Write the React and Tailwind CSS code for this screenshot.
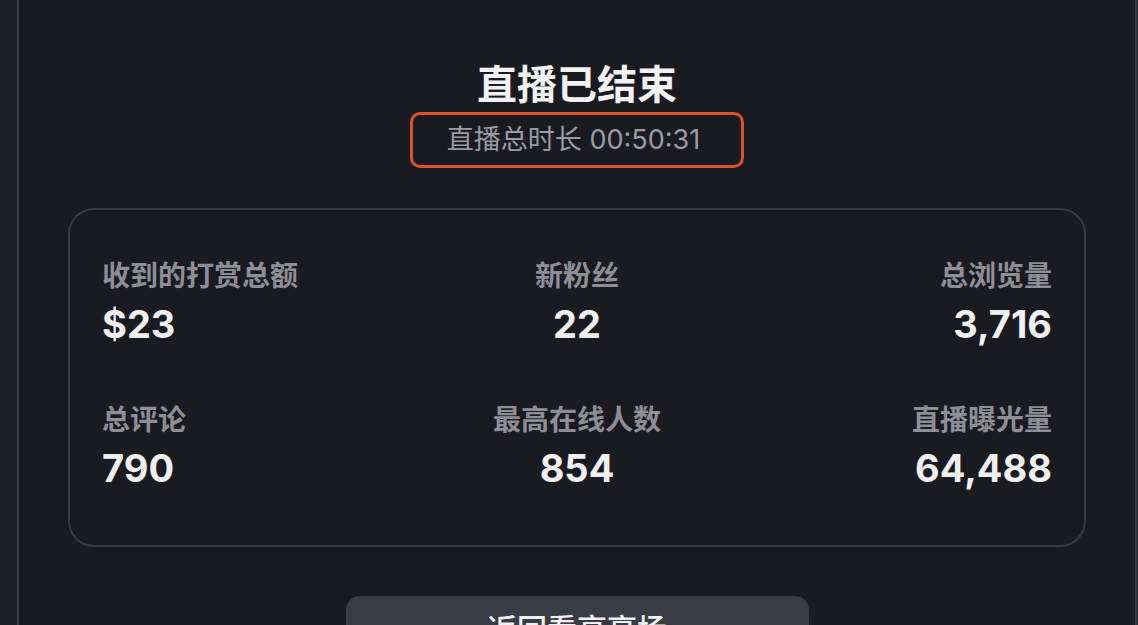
export default function App() {
  const stats = [
    { label: "收到的打赏总额", value: "$23", align: "text-left" },
    { label: "新粉丝", value: "22", align: "text-center" },
    { label: "总浏览量", value: "3,716", align: "text-right" },
    { label: "总评论", value: "790", align: "text-left" },
    { label: "最高在线人数", value: "854", align: "text-center" },
    { label: "直播曝光量", value: "64,488", align: "text-right" },
  ];
  const font = { fontFamily: 'Inter, "Noto Sans CJK SC", "Noto Sans", sans-serif' };
  return (
    <div className="w-[1138px] h-[625px] bg-[#1d1e23] flex overflow-hidden" style={font}>
      <div className="ml-[17px] w-[1120px] h-[625px] border-l-2 border-r-2 border-[#3b3c42] bg-[#1a1b21] flex flex-col items-center pt-[61px]">
        <h1 className="text-[40px] leading-[48px] font-bold text-[#f2f2f4]">直播已结束</h1>
        <div className="mt-[3px] shrink-0 flex items-center pl-[34px] pr-[41px] py-[9px] border-[3px] border-[#e0512b] rounded-[10px]">
          <span className="text-[27px] leading-[32px] text-[#9a9ba3]">直播总时长 00:50:31</span>
        </div>
        <div className="mt-[40px] shrink-0 w-[1018px] border-2 border-[#3a3b42] rounded-[26px] px-[32px] pt-[48px] pb-[54px] grid grid-cols-3 gap-y-[55px]">
          {stats.map((s) => (
            <div key={s.label} className={`${s.align} flex flex-col`}>
              <div className="text-[28px] leading-[36px] font-semibold text-[#8e8f96]">{s.label}</div>
              <div className="mt-[7px] text-[38px] leading-[46px] font-bold text-[#f0f0f2]">{s.value}</div>
            </div>
          ))}
        </div>
        <div className="mt-[49px] w-[463px] h-[64px] shrink-0 bg-[#393c44] rounded-[14px] flex justify-center pt-[15px]">
          <span className="text-[30px] leading-[36px] font-medium text-[#f0f0f2]">返回看高亮场</span>
        </div>
      </div>
    </div>
  );
}
